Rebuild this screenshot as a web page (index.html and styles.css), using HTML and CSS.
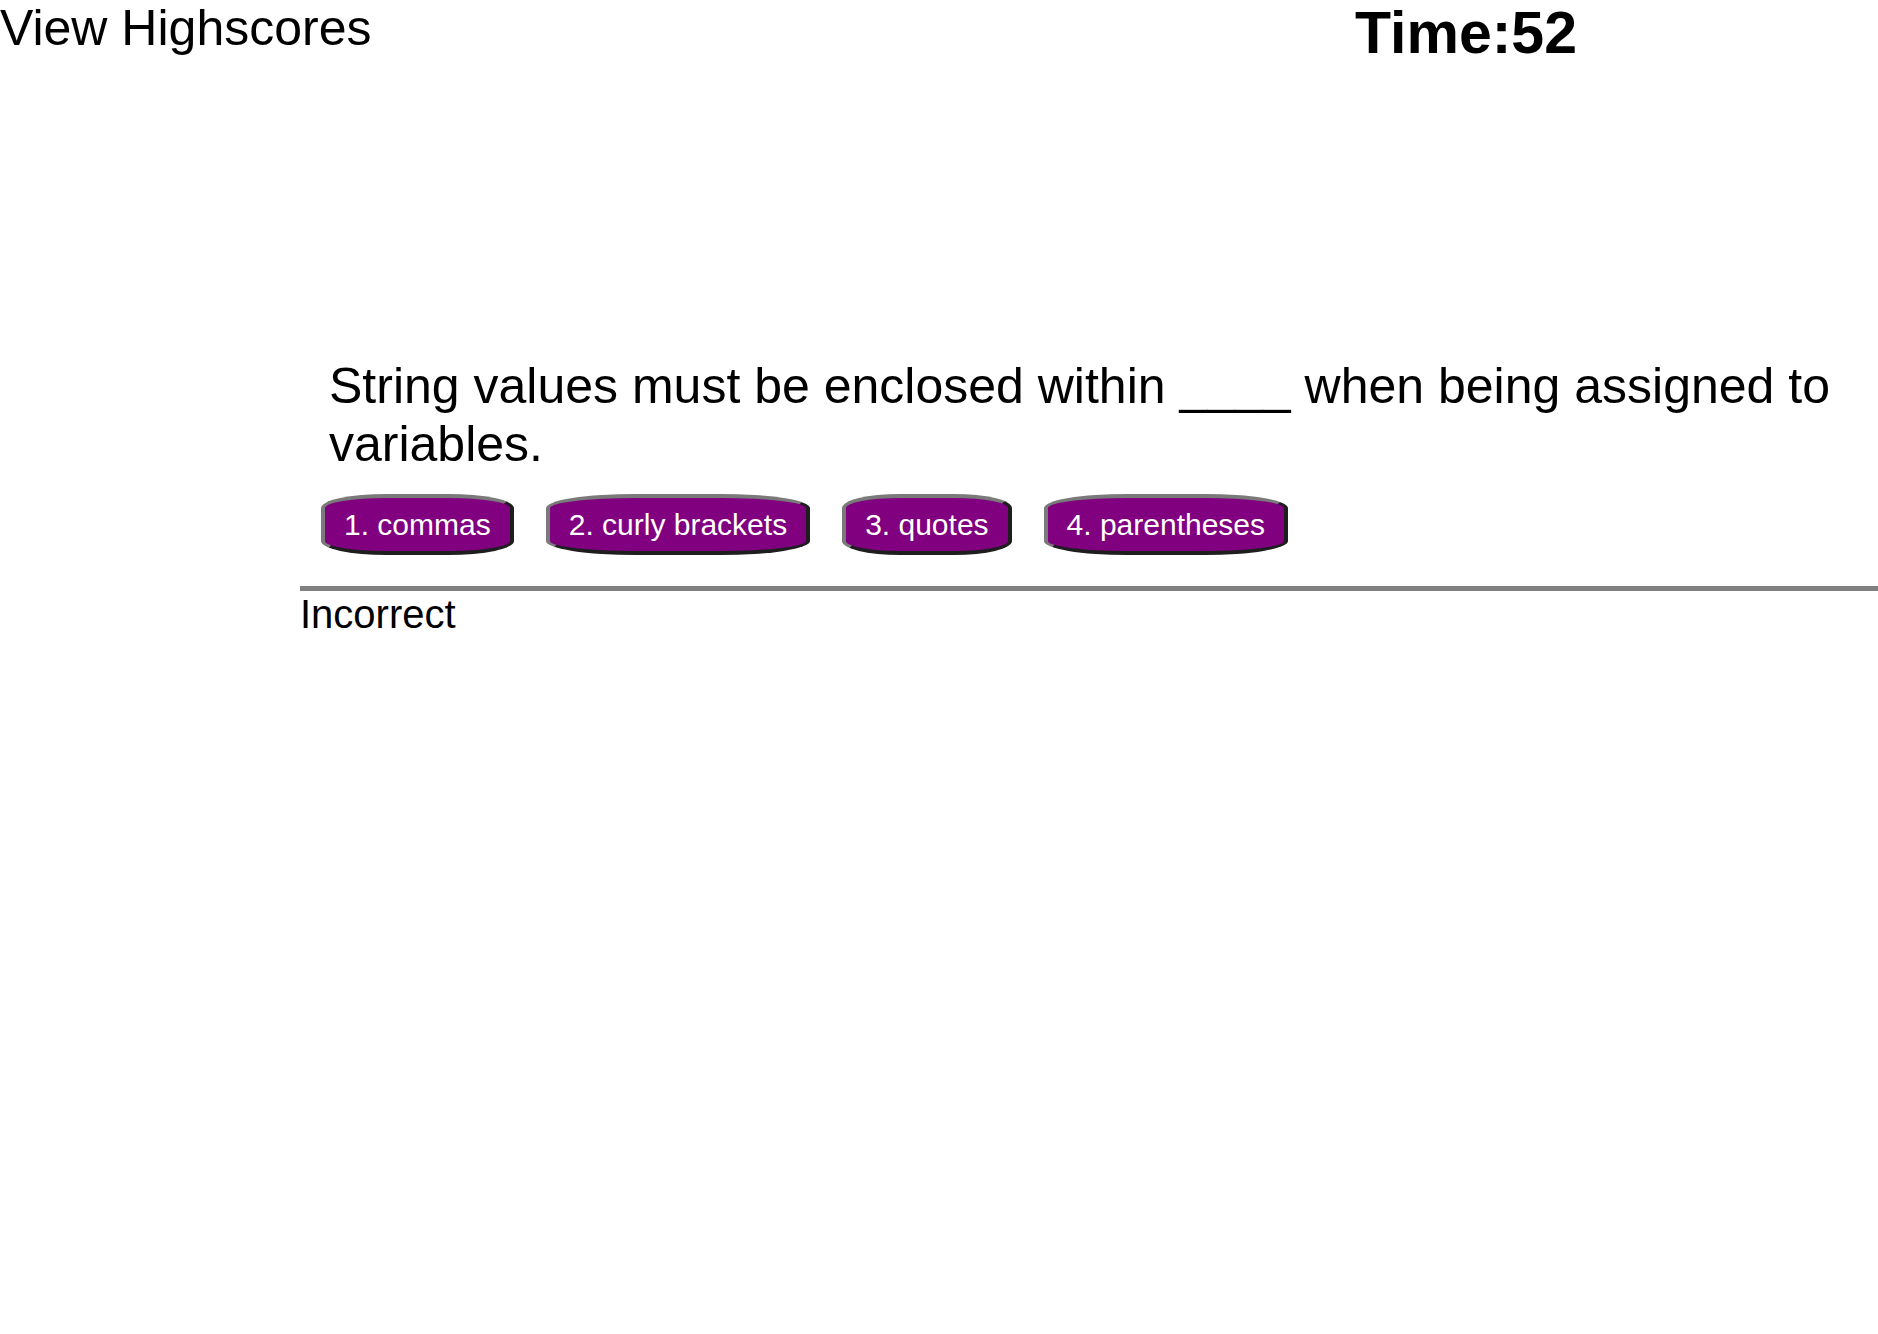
FILE: index.html
```html
<!DOCTYPE html>
<html lang="en">
<head>
<meta charset="utf-8">
<title>Code Quiz</title>
<link rel="stylesheet" href="styles.css">
</head>
<body>
<header class="topbar">
  <a class="highscores" href="#">View Highscores</a>
  <div class="timer">Time:52</div>
</header>
<main class="quiz">
  <section class="question-card">
    <h2 class="question">String values must be enclosed within ____ when being assigned to variables.</h2>
    <div class="choices">
      <button class="choice">1. commas</button>
      <button class="choice">2. curly brackets</button>
      <button class="choice">3. quotes</button>
      <button class="choice">4. parentheses</button>
    </div>
  </section>
  <div class="feedback">
    <hr class="divider">
    <p class="result">Incorrect</p>
  </div>
</main>
</body>
</html>
```
FILE: styles.css
```css
html, body {
  margin: 0;
  padding: 0;
  background: #ffffff;
}
body {
  font-family: "Liberation Sans", Arial, sans-serif;
  color: #000000;
}
.topbar {
  display: flex;
  justify-content: space-between;
  align-items: flex-start;
}
.highscores {
  font-size: 50px;
  color: #000000;
  text-decoration: none;
  line-height: 1.15;
}
.timer {
  font-size: 59px;
  font-weight: bold;
  line-height: 1.15;
  margin-right: 301px;
}
.quiz {
  margin-left: 300px;
  margin-top: 289px;
}
.question-card {
  padding-left: 21px;
}
.question {
  font-size: 50px;
  font-weight: normal;
  line-height: 58px;
  margin: 0 0 21px 8px;
}
.choices {
  display: flex;
  gap: 32px;
}
.choice {
  font-family: "Liberation Sans", Arial, sans-serif;
  font-size: 30px;
  color: #ffffff;
  background: #800080;
  border-style: solid;
  border-width: 4px;
  border-color: #7a7a7a #1e1e1e #1e1e1e #7a7a7a;
  border-radius: 34% / 14px;
  padding: 10px 19px;
  line-height: 33px;
  cursor: pointer;
}
.feedback {
  margin-top: 31px;
}
.divider {
  margin: 0;
  border: none;
  height: 5px;
  background: #808080;
}
.result {
  margin: 0;
  font-size: 40px;
  line-height: 46px;
}
```
